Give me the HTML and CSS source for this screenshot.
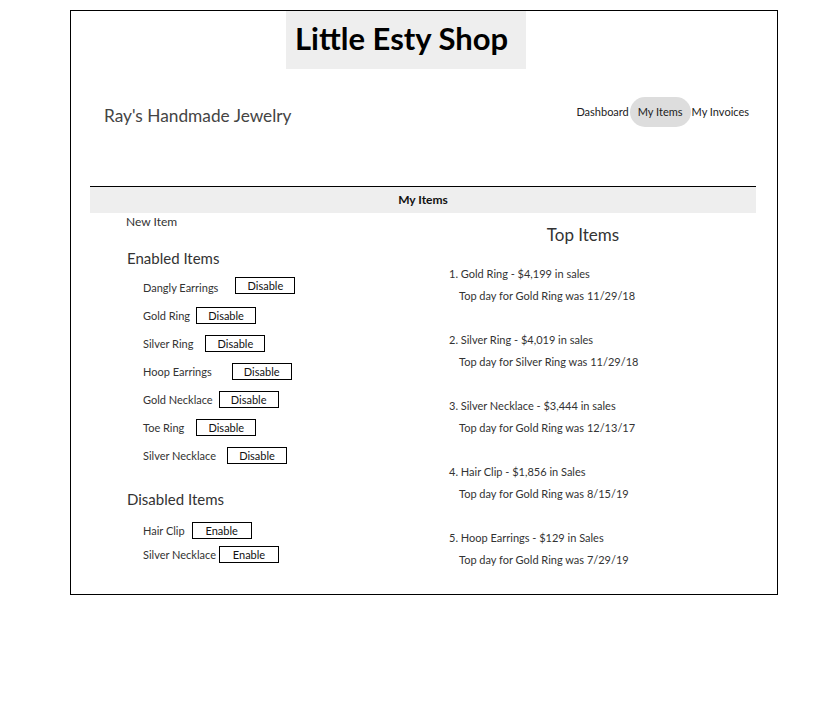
FILE: index.html
```html
<!DOCTYPE html>
<html>
<head>
<meta charset="utf-8">
<link rel="stylesheet" href="styles.css">
</head>
<body>
<div class="page">
  <div class="title-row">
    <h1 class="title">Little Esty Shop</h1>
  </div>
  <div class="merchant-row">
    <div class="merchant">Ray's Handmade Jewelry</div>
    <nav class="nav">
      <a class="nav-link">Dashboard</a>
      <a class="nav-link active">My Items</a>
      <a class="nav-link">My Invoices</a>
    </nav>
  </div>
  <div class="section-bar">My Items</div>
  <div class="content">
    <div class="left">
      <div class="new-item">New Item</div>
      <h2 class="group-title">Enabled Items</h2>
      <ul class="items">
        <li class="item"><span>Dangly Earrings</span><button class="btn g17 up">Disable</button></li>
        <li class="item"><span>Gold Ring</span><button class="btn g6">Disable</button></li>
        <li class="item"><span>Silver Ring</span><button class="btn g12">Disable</button></li>
        <li class="item"><span>Hoop Earrings</span><button class="btn g20">Disable</button></li>
        <li class="item"><span>Gold Necklace</span><button class="btn g6">Disable</button></li>
        <li class="item"><span>Toe Ring</span><button class="btn g12">Disable</button></li>
        <li class="item"><span>Silver Necklace</span><button class="btn g11">Disable</button></li>
      </ul>
      <h2 class="group-title disabled-title">Disabled Items</h2>
      <ul class="items tight">
        <li class="item"><span>Hair Clip</span><button class="btn g7">Enable</button></li>
        <li class="item"><span>Silver Necklace</span><button class="btn g3">Enable</button></li>
      </ul>
    </div>
    <div class="right">
      <h2 class="top-title">Top Items</h2>
      <ol class="top-list">
        <li class="top"><div>1. Gold Ring - $4,199 in sales</div><div class="sub">Top day for Gold Ring was 11/29/18</div></li>
        <li class="top"><div>2. Silver Ring - $4,019 in sales</div><div class="sub">Top day for Silver Ring was 11/29/18</div></li>
        <li class="top"><div>3. Silver Necklace - $3,444 in sales</div><div class="sub">Top day for Gold Ring was 12/13/17</div></li>
        <li class="top"><div>4. Hair Clip - $1,856 in Sales</div><div class="sub">Top day for Gold Ring was 8/15/19</div></li>
        <li class="top"><div>5. Hoop Earrings - $129 in Sales</div><div class="sub">Top day for Gold Ring was 7/29/19</div></li>
      </ol>
    </div>
  </div>
</div>
</body>
</html>
```
FILE: styles.css
```css
* { box-sizing: border-box; }
body {
  margin: 0;
  font-family: Lato, "Noto Sans", sans-serif;
  color: #333;
  background: #fff;
}
.page {
  margin: 10px 0 0 70px;
  width: 708px;
  height: 585px;
  border: 1px solid #000;
}
.title-row {
  display: flex;
  justify-content: flex-start;
  padding-left: 215px;
}
.title {
  margin: 0;
  width: 240px;
  height: 58px;
  background: #eee;
  color: #000;
  font-size: 31px;
  font-weight: 700;
  line-height: 54px;
  padding-left: 9px;
}
.merchant-row {
  display: flex;
  justify-content: space-between;
  align-items: flex-start;
  padding: 28px 27px 0 33px;
  height: 117px;
}
.merchant {
  font-size: 17.3px;
  margin-top: 8px;
  color: #444;
}
.nav {
  display: flex;
  align-items: center;
}
.nav-link {
  font-size: 11px;
  color: #222;
  height: 30px;
  line-height: 30px;
  padding: 0 1px;
}
.nav-link.active {
  background: #ddd;
  border-radius: 15px;
  padding: 0 8px;
}
.section-bar {
  margin: 0 21px 0 19px;
  border-top: 1px solid #000;
  background: #eee;
  height: 27px;
  line-height: 26px;
  text-align: center;
  font-size: 12px;
  font-weight: 700;
  color: #111;
}
.content {
  display: flex;
}
.left {
  width: 378px;
  padding-left: 55px;
}
.new-item {
  font-size: 12px;
  margin-top: 1px;
  line-height: 16px;
}
.group-title {
  margin: 19px 0 0 1px;
  font-size: 15px;
  font-weight: 400;
  line-height: 18px;
  color: #333;
}
.disabled-title { margin-top: 21px; }
.items {
  list-style: none;
  margin: 6px 0 0;
  padding: 0 0 0 17px;
}
.item {
  display: flex;
  align-items: center;
  height: 28px;
  font-size: 11px;
  color: #333;
}
.items.tight { margin-top: 10px; }
.items.tight .item { height: 24px; }
.btn {
  font-family: inherit;
  font-size: 11px;
  background: #fff;
  border: 1px solid #000;
  color: #111;
  width: 60px;
  height: 17px;
  padding: 0;
  line-height: 15px;
}
.g3 { margin-left: 3px; }
.g6 { margin-left: 6px; }
.g7 { margin-left: 7px; }
.g11 { margin-left: 11px; }
.g12 { margin-left: 12px; }
.g17 { margin-left: 17px; }
.g20 { margin-left: 20px; }
.up { margin-top: -4px; }
.right {
  flex: 1;
}
.top-title {
  margin: 11px 0 0;
  font-size: 17px;
  font-weight: 400;
  text-align: center;
  padding-right: 60px;
  color: #333;
}
.top-list {
  list-style: none;
  margin: 18px 0 0;
  padding: 0;
}
.top {
  font-size: 11px;
  height: 66px;
  line-height: 22px;
}
.sub { padding-left: 10px; }
```
